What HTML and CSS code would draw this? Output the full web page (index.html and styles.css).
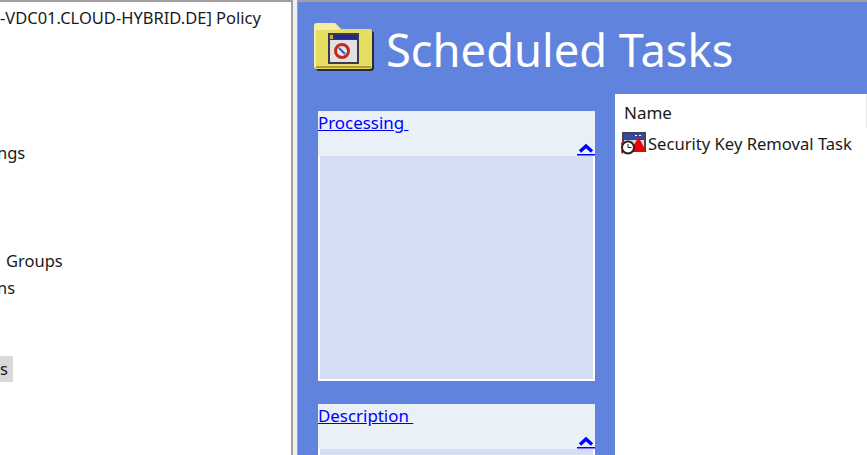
FILE: index.html
```html
<!DOCTYPE html>
<html>
<head>
    <title>Scheduled Tasks</title>
    <link rel="stylesheet" href="styles.css">
</head>
<body>
    <div class="window">
        <!-- Console tree, scrolled to the right -->
        <div class="tree">
            <div class="tree-row">-VDC01.CLOUD-HYBRID.DE] Policy</div>
            <div class="tree-row"></div>
            <div class="tree-row"></div>
            <div class="tree-row"></div>
            <div class="tree-row"></div>
            <div class="tree-row tree-cut">ngs</div>
            <div class="tree-row"></div>
            <div class="tree-row"></div>
            <div class="tree-row"></div>
            <div class="tree-row tree-indent">Groups</div>
            <div class="tree-row tree-cut">ns</div>
            <div class="tree-row"></div>
            <div class="tree-row"></div>
            <div class="tree-row tree-selected"><span>s</span></div>
        </div>

        <div class="splitter"></div>

        <!-- Extension view -->
        <div class="view">
            <div class="view-header">
                <svg class="folder-icon" width="60" height="50" viewBox="0 0 60 50">
                    <path d="M3 6 L25 6 L30 9 L57 9 Q60 9 60 12 L60 46 Q60 49 57 49 L5 49 Q2 49 2 46 Z" fill="#2b2a30"/>
                    <path d="M0 4 Q0 1 3 1 L21 1 L27 7 L56 7 Q58 7 58 9 L58 45 Q58 47 56 47 L3 47 Q0 47 0 45 Z" fill="#e6de62"/>
                    <path d="M0 4 Q0 1 3 1 L21 1 L27 7 L21 8 L2 8 L2 45 L0 45 Z" fill="#f3eda8"/>
                    <rect x="2" y="44" width="55" height="2" fill="#a89f3c"/>
                    <rect x="14" y="11" width="31" height="31" fill="#3a3a48"/>
                    <rect x="16" y="18" width="27" height="22" fill="#e2e2e2"/>
                    <rect x="16" y="13" width="27" height="4" fill="#26268c"/>
                    <rect x="16" y="13" width="3" height="4" fill="#c8b030"/>
                    <circle cx="28" cy="29" r="6.5" fill="#dfe6f0" stroke="#c42a1c" stroke-width="3"/>
                    <path d="M25 26 L31 32" stroke="#3c5aa8" stroke-width="2"/>
                </svg>
                <h1 class="view-title">Scheduled Tasks</h1>
            </div>
            <div class="view-body">
                <div class="side">
                    <div class="side-box">
                        <div class="side-head">
                            <a class="side-link" href="#">Processing&nbsp;</a>
                            <a class="side-toggle" href="#">
                                <svg width="18" height="13" viewBox="0 0 18 13">
                                    <path d="M3 8.5 L9 3 L15 8.5" fill="none" stroke="#0000ff" stroke-width="3.5"/>
                                    <rect x="0" y="11" width="18" height="1.5" fill="#0000ff"/>
                                </svg>
                            </a>
                        </div>
                        <div class="side-content side-tall"></div>
                    </div>
                    <div class="side-box">
                        <div class="side-head">
                            <a class="side-link" href="#">Description&nbsp;</a>
                            <a class="side-toggle" href="#">
                                <svg width="18" height="13" viewBox="0 0 18 13">
                                    <path d="M3 8.5 L9 3 L15 8.5" fill="none" stroke="#0000ff" stroke-width="3.5"/>
                                    <rect x="0" y="11" width="18" height="1.5" fill="#0000ff"/>
                                </svg>
                            </a>
                        </div>
                        <div class="side-content"></div>
                    </div>
                </div>
                <div class="list">
                    <div class="list-head">Name</div>
                    <div class="list-row">
                        <svg class="task-icon" width="26" height="24" viewBox="0 0 26 24">
                            <rect x="1" y="1" width="24" height="20" fill="#44444c"/>
                            <rect x="3" y="3" width="20" height="5" fill="#3a4aa0"/>
                            <rect x="14" y="4" width="2" height="1" fill="#fff"/>
                            <rect x="18" y="4" width="2" height="1" fill="#fff"/>
                            <rect x="3" y="9" width="20" height="11" fill="#d8d8dc"/>
                            <path d="M9 21 L17.5 6 L25.5 21 Z" fill="#f00000"/>
                            <circle cx="7" cy="16.5" r="6" fill="#fff" stroke="#222" stroke-width="2"/>
                            <path d="M7 13 V16.5 H10.5" fill="none" stroke="#222" stroke-width="1"/>
                            <path d="M2 22.5 A7.5 7.5 0 0 1 2 11" fill="none" stroke="#c42a1c" stroke-width="1.5"/>
                        </svg>
                        <span class="task-name">Security Key Removal Task</span>
                    </div>
                </div>
            </div>
        </div>
    </div>
</body>
</html>
```

FILE: styles.css
```css
body {
    margin: 0;
    overflow: hidden;
    background-color: #f0f0f0;
    font-family: "Noto Sans", "Open Sans", sans-serif;
}

.window {
    display: flex;
    height: 455px;
    width: 867px;
    overflow: hidden;
}

/* Console tree */
.tree {
    width: 293px;
    flex: none;
    padding-top: 3px;
    box-sizing: border-box;
    background-color: #fff;
    border-top: 2px solid #a0a0a0;
    border-right: 2px solid #a0a0a0;
    overflow: hidden;
}

.tree-row {
    height: 27px;
    line-height: 25px;
    font-size: 16.5px;
    color: #1a1a1a;
    white-space: nowrap;
}

.tree-indent {
    padding-left: 6px;
}

/* names that run off the left edge of the pane */
.tree-cut {
    text-indent: -3px;
}

.tree-selected span {
    display: inline-block;
    width: 13px;
    height: 26px;
    background-color: #d9d9d9;
}

.splitter {
    width: 4px;
    flex: none;
    background-color: #f0f0f0;
}

/* Extension view */
.view {
    flex: 1;
    background-color: #6084de;
    border-left: 1px solid #a0a0a0;
    border-top: 2px solid #a0a0a0;
}

.view-header {
    display: flex;
    align-items: center;
    height: 92px;
    box-sizing: border-box;
    padding: 0 0 3px 16px;
}

.folder-icon {
    flex: none;
}

.view-title {
    margin: 6px 0 0 12px;
    color: #fff;
    font-size: 45.3px;
    font-weight: normal;
}

.view-body {
    display: flex;
}

.side {
    width: 277px;
    flex: none;
    margin-left: 20px;
    padding-top: 17px;
}

.side-box {
    margin-bottom: 23px;
    background-color: #e9f0f8;
}

.side-head {
    height: 45px;
    position: relative;
}

.side-link {
    font-size: 16.9px;
    color: #0000ff;
}

.side-toggle {
    position: absolute;
    right: 0;
    bottom: 0;
    line-height: 0;
}

.side-content {
    height: 225px;
    background-color: #d6def6;
    border: 2px solid #fff;
    border-top: none;
    box-sizing: border-box;
}

.list {
    flex: 1;
    margin-left: 20px;
    background-color: #fff;
    height: 400px;
}

.list-head {
    height: 34px;
    line-height: 37px;
    padding-left: 9px;
    font-size: 17px;
    color: #1a1a1a;
    border-right: 1px solid #e5e5e5;
}

.list-row {
    display: flex;
    align-items: center;
    height: 30px;
    padding-left: 6px;
    color: #1a1a1a;
}

.task-icon {
    flex: none;
}

.task-name {
    margin-left: 1px;
    font-size: 16.6px;
}
```
